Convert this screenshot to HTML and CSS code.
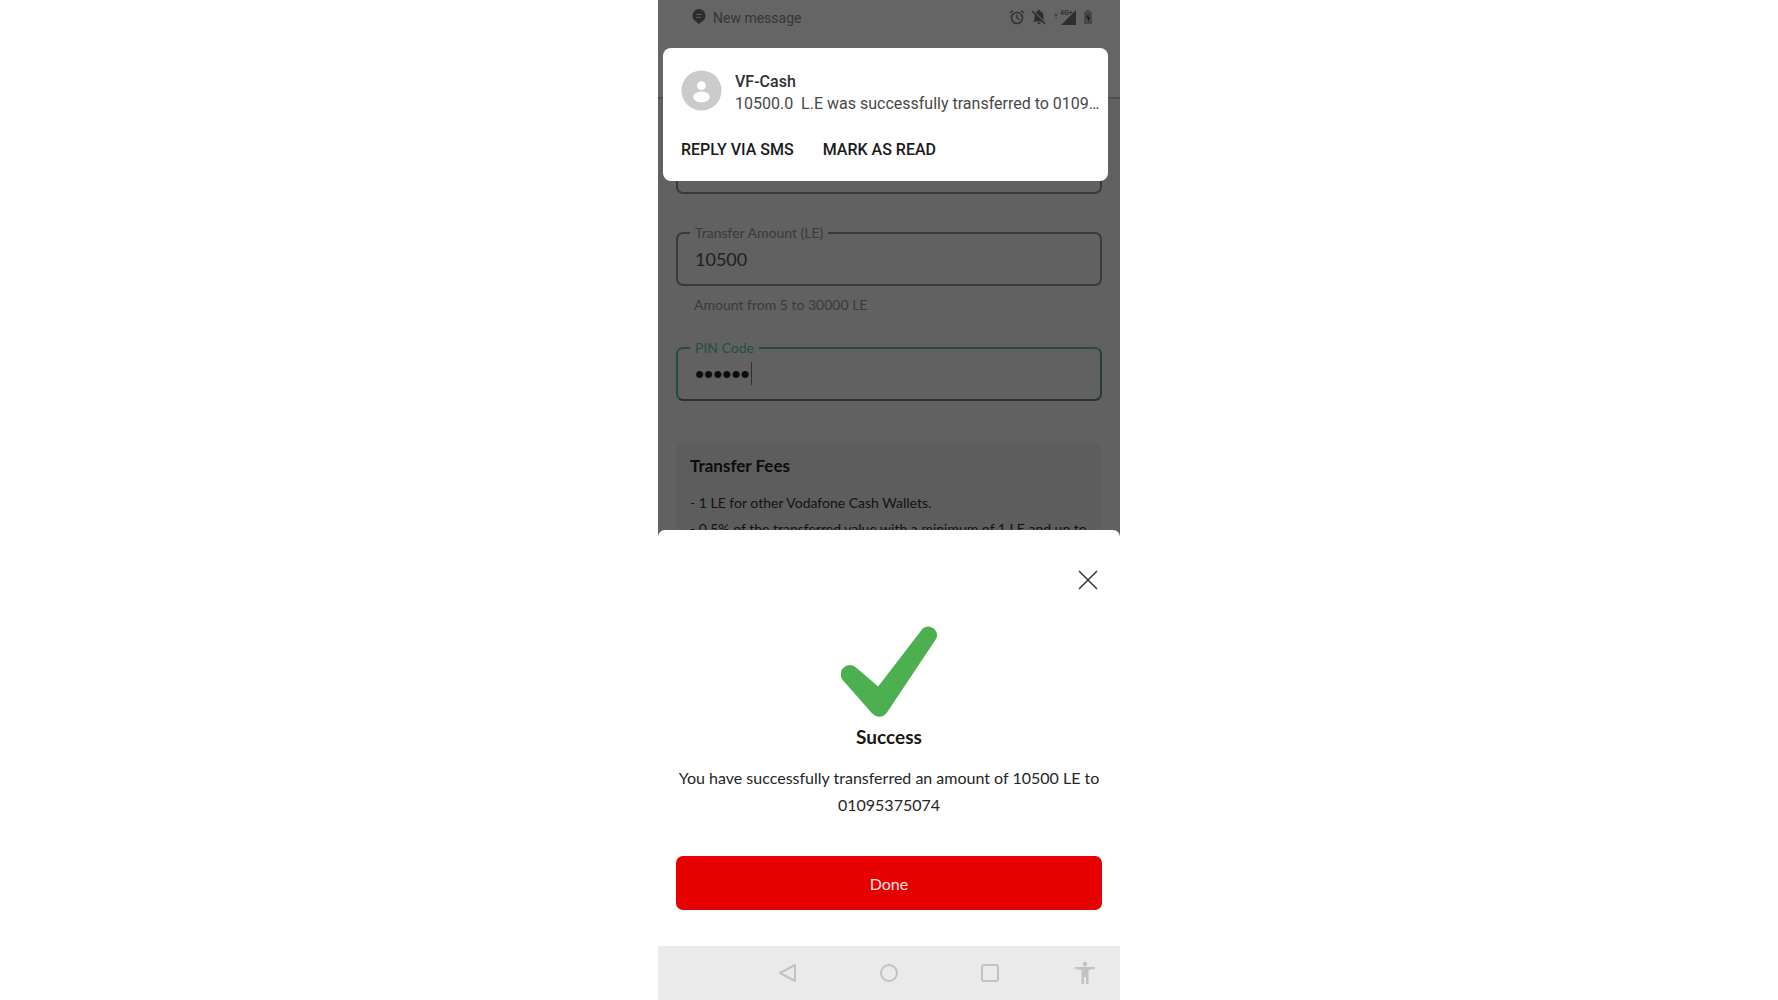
FILE: index.html
```
<!DOCTYPE html>
<html lang="en">
<head>
    <meta charset="UTF-8">
    <meta name="viewport" content="width=device-width, initial-scale=1.0">
    <title>Transfer money</title>
    <link rel="stylesheet" href="styles.css">
</head>
<body>

    <main class="phone">
        <div class="screen">
            <header class="status-bar">
                <svg class="chat-icon" width="14" height="16" viewBox="0 0 14 16">
                    <path d="M7 0a6.500 6.500 0 0 1 6.500 6.500c0 3-1.800 5-3.500 6L7 15l-3-2.500C2 11.500.5 9.500.5 6.500A6.500 6.500 0 0 1 7 0z" fill="#2c2c2c"/>
                    <path d="M4 5.500h6M4 8.500h5" stroke="#585858"/>
                </svg>
                <span class="status-text">New message</span>
                <div class="status-icons">
                    <svg width="16" height="16" viewBox="0 0 16 16" fill="none" stroke="#333">
                        <circle cx="8" cy="9" r="5.500" stroke-width="1.600"/>
                        <path d="M8 5.500V9l2.500 1.800M1 4l3-2.500M15 4l-3-2.500" stroke-width="1.400"/>
                    </svg>
                    <svg width="16" height="16" viewBox="0 0 16 16">
                        <path d="M8 1c1 0 1.300.6 1.300 1.300C11.600 3 12.500 5 12.500 7v3.500L14 12.500H2L3.500 10.500V7c0-2 .9-4 3.200-4.700C6.700 1.600 7 1 8 1zM6.300 13.500h3.400c0 2-3.400 2-3.400 0z" fill="#2e2e2e"/>
                        <path d="M2 1.500l13 13" stroke="#646464" stroke-width="1.200"/>
                        <path d="M1 2l13 13" stroke="#2e2e2e" stroke-width="1.400"/>
                    </svg>
                    <svg width="24" height="18" viewBox="0 0 24 18">
                        <path d="M3 5l2 3H1zM3 11l1-2H2z" fill="#444"/>
                        <path d="M23 2v15H8z" fill="#2e2e2e"/>
                        <text x="7" y="7" class="network">4G+</text>
                    </svg>
                    <svg class="battery" width="10" height="16" viewBox="0 0 10 16">
                        <path d="M3 1h4v1.500h2V15H1V2.500h2z" fill="#484848"/>
                        <path d="M5.500 4L3 9h2v4l2.500-5h-2z" fill="#1f1f1f"/>
                    </svg>
                </div>
            </header>

            <form class="transfer-form">
                <div class="field-box">
                    <input type="tel" aria-label="Mobile number">
                </div>

                <fieldset class="field">
                    <legend><label for="amount">Transfer Amount (LE)</label></legend>
                    <input id="amount" type="text" value="10500">
                </fieldset>
                <p class="hint">Amount from 5 to 30000 LE</p>

                <fieldset class="field field-active">
                    <legend><label for="pin">PIN Code</label></legend>
                    <input id="pin" type="password" value="123456">
                    <span class="caret"></span>
                </fieldset>

                <section class="fees">
                    <h2>Transfer Fees</h2>
                    <p>- 1 LE for other Vodafone Cash Wallets.</p>
                    <p>- 0.5% of the transferred value with a minimum of 1 LE and up to</p>
                </section>
            </form>
        </div>

        <section class="sheet">
            <button class="close" type="button" aria-label="Close">
                <svg width="20" height="20" viewBox="0 0 20 20">
                    <path d="M1 1l18 18M19 1L1 19" stroke="#333" stroke-width="1.500"/>
                </svg>
            </button>
            <svg class="check" width="97" height="92" viewBox="0 0 290 275">
                <path d="M46 128L111 184L245 10A26 26 0 0 1 284 42L138 261Q117 287 92 263L7 167A27 27 0 0 1 46 128z" fill="#4caf50"/>
            </svg>
            <h1>Success</h1>
            <p>You have successfully transferred an amount of 10500 LE to 01095375074</p>
            <button class="done" type="button">Done</button>
        </section>

        <nav class="nav-bar">
            <button type="button" aria-label="Back">
                <svg width="20" height="20" viewBox="0 0 20 20"><path d="M17 2v16L2 10z"/></svg>
            </button>
            <button type="button" aria-label="Home">
                <svg width="20" height="20" viewBox="0 0 20 20"><circle cx="10" cy="10" r="8"/></svg>
            </button>
            <button type="button" aria-label="Recent apps">
                <svg width="20" height="20" viewBox="0 0 20 20"><rect x="2" y="2" width="16" height="16" rx="2"/></svg>
            </button>
            <button class="access" type="button" aria-label="Accessibility">
                <svg width="20" height="24" viewBox="0 0 20 24">
                    <circle cx="10" cy="3" r="2.200"/>
                    <path d="M0 6h20v2l-6.500 1v14h-2.500v-7H9v7H6.500V9L0 8z"/>
                </svg>
            </button>
        </nav>

        <aside class="notification">
            <div class="message">
                <svg width="41" height="41" viewBox="0 0 42 42">
                    <circle cx="21" cy="21" r="20.500" fill="#cbcbcb"/>
                    <circle cx="21" cy="16" r="4.500" fill="#fff"/>
                    <ellipse cx="21" cy="27.500" rx="8.500" ry="5.500" fill="#fff"/>
                </svg>
                <div class="message-text">
                    <strong>VF-Cash</strong>
                    <p>10500.0  L.E was successfully transferred to 01095375074</p>
                </div>
            </div>
            <div class="actions">
                <button type="button">REPLY VIA SMS</button>
                <button type="button">MARK AS READ</button>
            </div>
        </aside>
    </main>

</body>
</html>
```
FILE: styles.css
```
* {
    margin: 0;
    padding: 0;
    box-sizing: border-box;
}

body {
    background: #fff;
    font-family: Lato, "Noto Sans", sans-serif;
}

button, input {
    border: none;
    background: none;
    font: inherit;
    color: inherit;
}

button {
    cursor: pointer;
}

input {
    outline: none;
}

.phone {
    position: relative;
    display: flex;
    flex-direction: column;
    max-width: 462px;
    height: 100vh;
    margin: 0 auto;
    background: #616161;
}

.screen {
    flex: 1;
    min-height: 0;
    overflow: hidden;
}

/* status bar */
.status-bar {
    display: flex;
    align-items: flex-start;
    height: 99px;
    padding: 8px 27px 0 34px;
    background: #656565;
    border-bottom: 2px solid #505050;
    font-family: Roboto, sans-serif;
}

.chat-icon {
    margin-top: 1px;
}

.status-text {
    margin-left: 7px;
    font-size: 14px;
    line-height: 20px;
    color: #363636;
}

.status-icons {
    display: flex;
    align-items: center;
    gap: 6px;
    margin-left: auto;
}

.network {
    font-size: 7px;
    font-weight: 700;
    fill: #333;
}

/* form */
.transfer-form {
    padding: 40px 18px 0;
}

.field-box {
    height: 55px;
    border: 2px solid #3a3a3a;
    border-radius: 7px;
}

.field {
    position: relative;
    height: 62px;
    margin-top: 30px;
    padding: 0 12px;
    border: 2px solid #3a3a3a;
    border-radius: 7px;
    color: #202020;
}

.field legend {
    padding: 0 5px;
    font-size: 14px;
    line-height: 18px;
    color: #3a3a3a;
}

.field input {
    display: block;
    width: 100%;
    height: 34px;
    padding: 0 5px;
    font-size: 18px;
}

.hint {
    margin: 9px 18px 0;
    font-size: 14px;
    line-height: 20px;
    color: #3a3a3a;
}

.field-active {
    margin-top: 24px;
    border-color: #2c4745 #2b3a3c #263437 #254a47;
}

.field-active legend {
    color: #1e4f48;
}

.field-active input {
    font-family: "Liberation Sans", sans-serif;
    font-size: 26px;
    color: #0c0c0c;
}

.caret {
    position: absolute;
    top: 5px;
    left: 73px;
    width: 1px;
    height: 23px;
    background: #303030;
}

.fees {
    margin-top: 42px;
    padding: 11px 14px;
    background: #5d5d5d;
    border-radius: 8px;
    font-size: 14px;
    line-height: 26px;
    color: #121212;
    white-space: nowrap;
}

.fees h2 {
    margin-bottom: 12px;
    font-size: 17px;
    line-height: 24px;
    color: #0c0c0c;
}

/* bottom sheet */
.sheet {
    display: flex;
    flex-direction: column;
    align-items: center;
    padding: 40px 18px 36px;
    background: #fff;
    border-radius: 7px 7px 0 0;
    text-align: center;
    color: #252525;
}

.close {
    align-self: flex-end;
    width: 20px;
    height: 20px;
    margin-right: 4px;
}

.close svg, .check {
    display: block;
}

.check {
    margin-top: 35px;
}

.sheet h1 {
    margin-top: 8px;
    font-size: 19px;
    line-height: 24px;
    color: #181818;
}

.sheet p {
    margin-top: 15px;
    font-size: 16px;
    line-height: 27px;
}

.done {
    width: 100%;
    height: 54px;
    margin-top: 38px;
    border-radius: 7px;
    background: #e60000;
    font-size: 16px;
    color: #ffe5e5;
}

/* navigation */
.nav-bar {
    position: relative;
    display: flex;
    justify-content: center;
    align-items: center;
    gap: 81px;
    height: 54px;
    background: #eaeaea;
}

.nav-bar button {
    width: 20px;
    height: 20px;
}

.nav-bar svg {
    display: block;
    fill: none;
    stroke: #c2c2c2;
    stroke-width: 2;
    stroke-linejoin: round;
}

.nav-bar .access {
    position: absolute;
    right: 25px;
    height: 24px;
}

.nav-bar .access svg {
    fill: #c2c2c2;
    stroke: none;
}

/* notification */
.notification {
    position: absolute;
    top: 48px;
    left: 5px;
    right: 12px;
    padding: 22px 7px 20px 18px;
    background: #fff;
    border-radius: 8px;
    font-family: Roboto, sans-serif;
    font-size: 16px;
}

.message {
    display: flex;
    gap: 13px;
}

.message svg {
    flex: none;
}

.message-text {
    min-width: 0;
    padding-top: 1px;
    line-height: 22px;
    color: #484848;
}

.message-text strong {
    display: block;
    font-weight: 500;
    color: #303030;
}

.message-text p {
    overflow: hidden;
    text-overflow: ellipsis;
    white-space: pre;
}

.actions {
    display: flex;
    gap: 29px;
    margin-top: 24px;
}

.actions button {
    font-weight: 500;
    line-height: 22px;
    color: #1a1a1a;
}
```
